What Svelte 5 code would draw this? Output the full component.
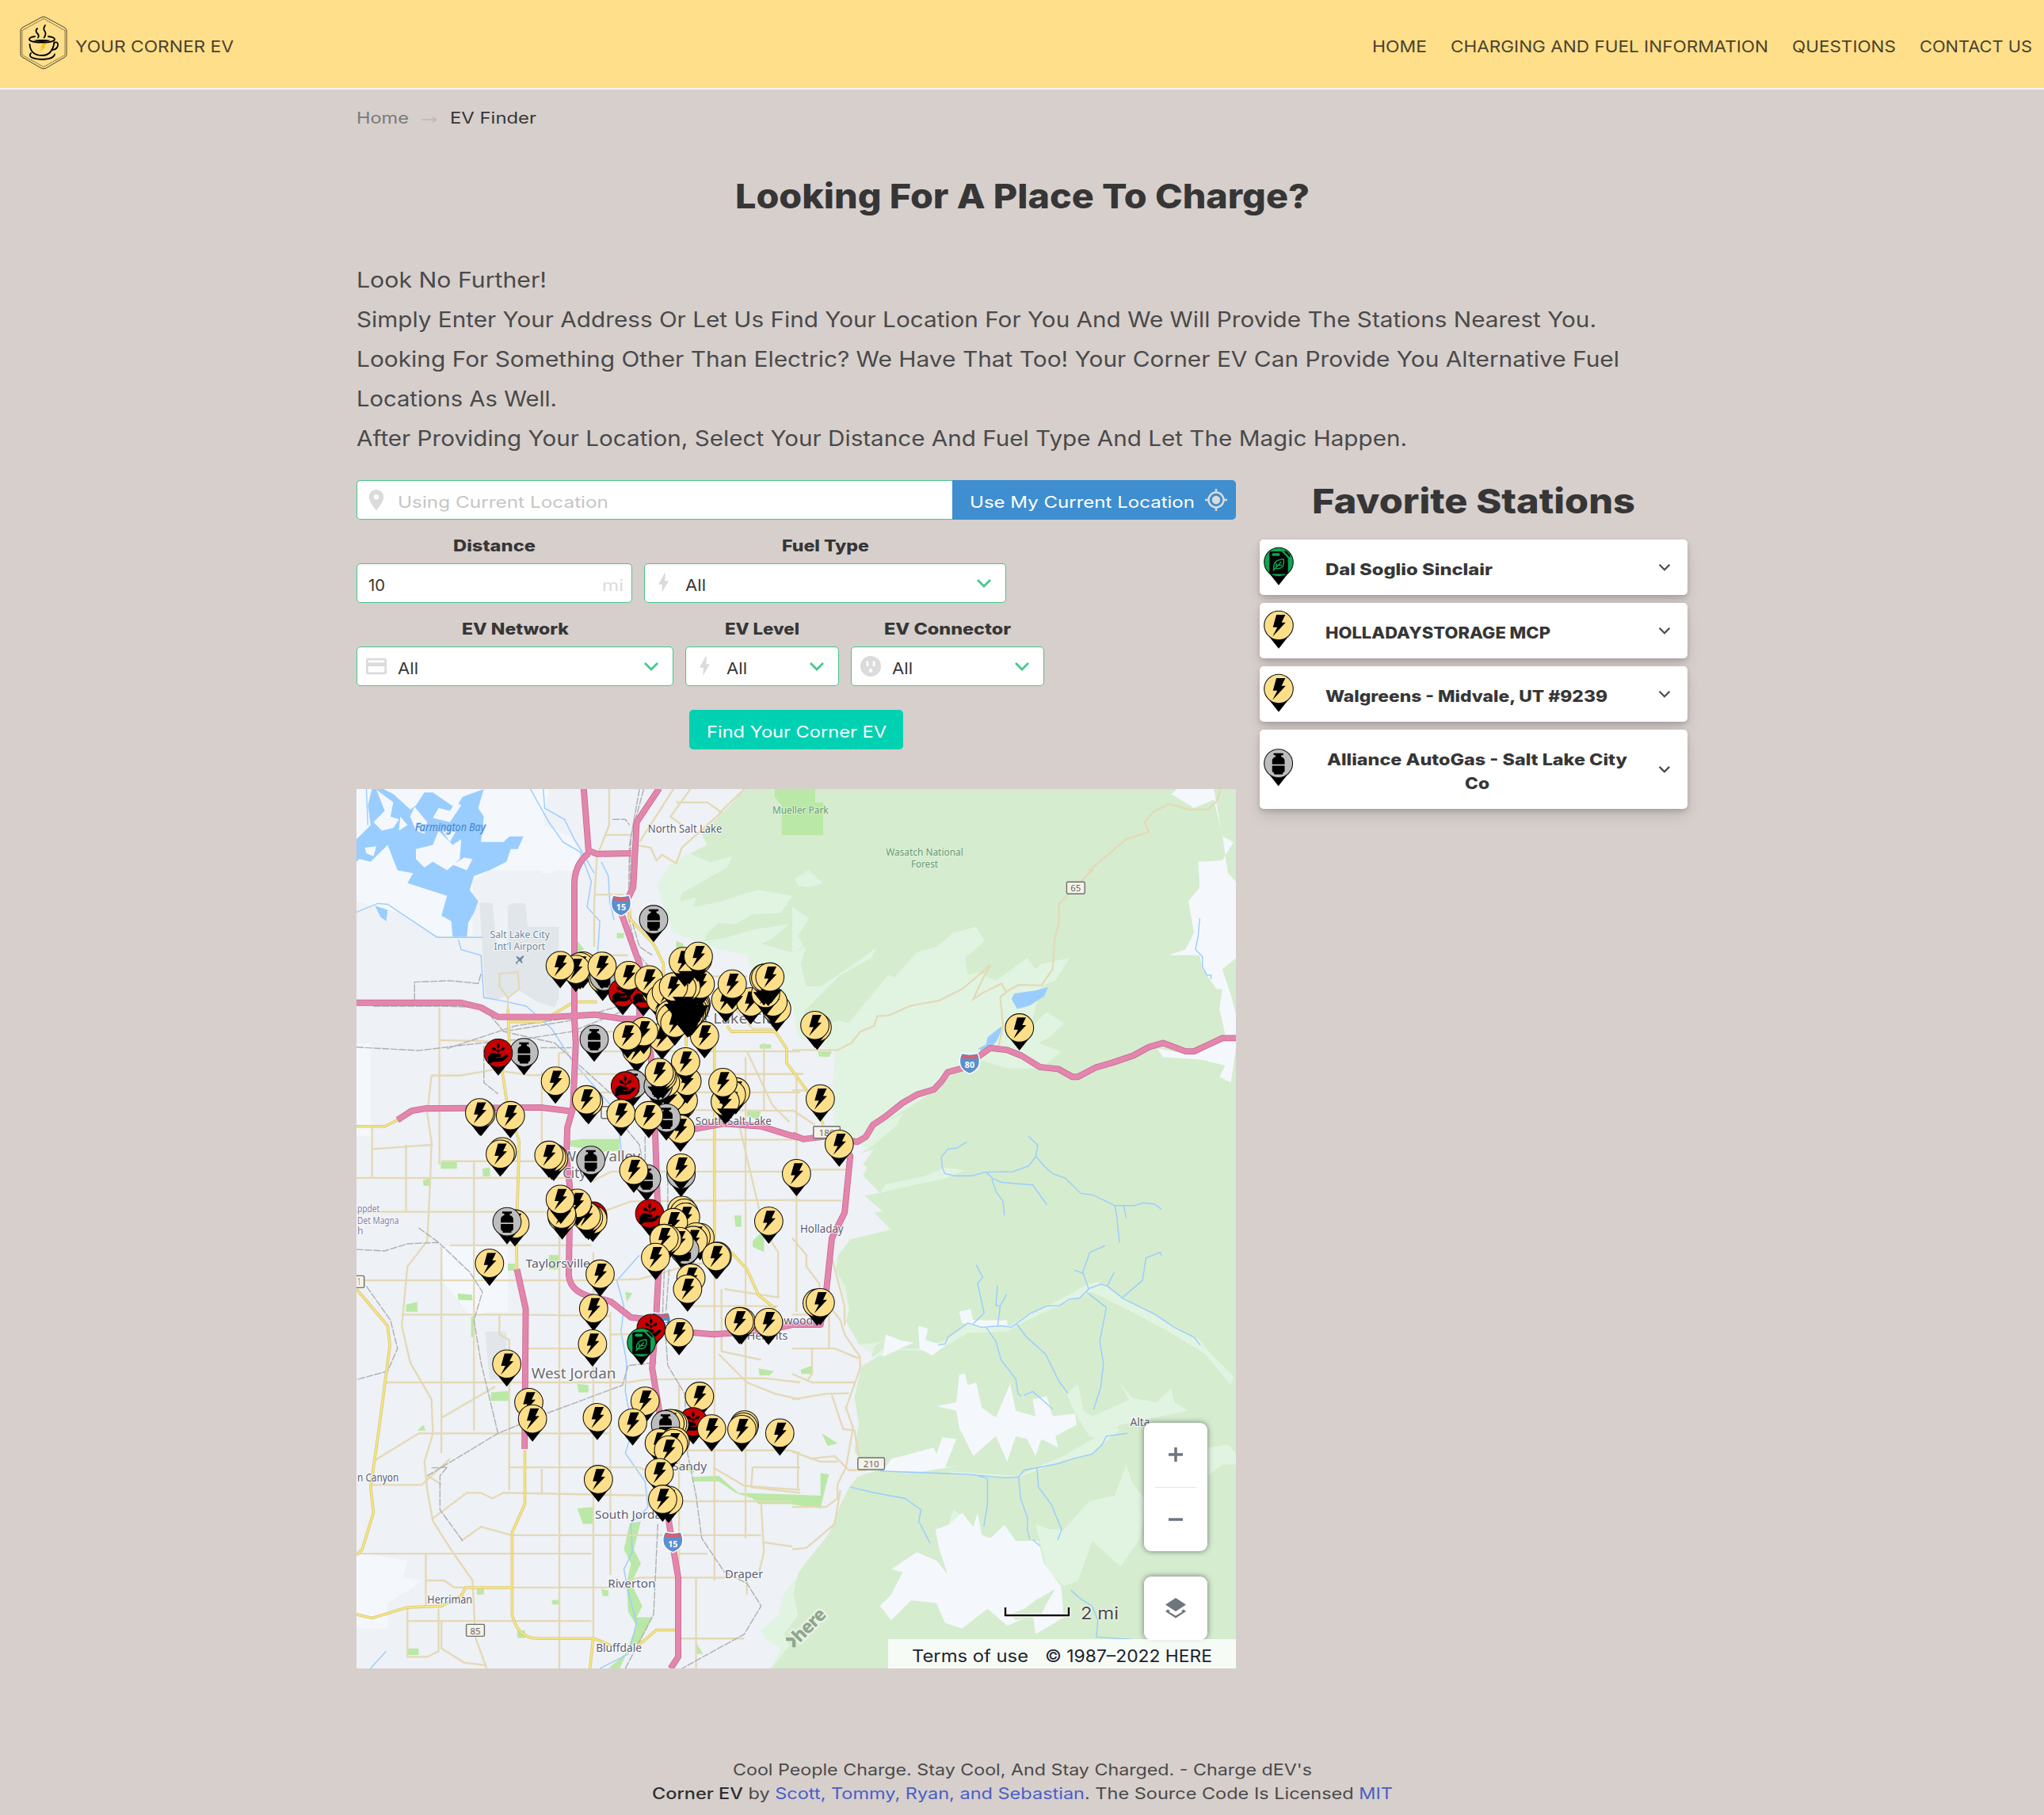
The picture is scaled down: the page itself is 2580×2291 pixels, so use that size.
<script>
  // Extends a line of text to a given width by widening its glyphs.
  function fit(node, width) {
    const range = document.createRange();
    range.selectNodeContents(node);
    const natural = range.getBoundingClientRect().width;
    node.style.width = `${width}px`;
    node.style.transform = `scaleX(${width / natural})`;
  }

  const nav = [
    ['HOME', 69],
    ['CHARGING AND FUEL INFORMATION', 401],
    ['QUESTIONS', 131],
    ['CONTACT US', 142]
  ];

  const intro = [
    ['Look No Further!', 240],
    ['Simply Enter Your Address Or Let Us Find Your Location For You And We Will Provide The Stations Nearest You.', 1565],
    ['Looking For Something Other Than Electric? We Have That Too! Your Corner EV Can Provide You Alternative Fuel', 1594],
    ['Locations As Well.', 253],
    ['After Providing Your Location, Select Your Distance And Fuel Type And Let The Magic Happen.', 1326]
  ];

  const favorites = [
    { type: 'G', lines: [['Dal Soglio Sinclair', 211]] },
    { type: 'E', lines: [['HOLLADAYSTORAGE MCP', 284]] },
    { type: 'E', lines: [['Walgreens - Midvale, UT #9239', 356]] },
    { type: 'L', lines: [['Alliance AutoGas - Salt Lake City', 379], ['Co', 31]] }
  ];

  const fill = { E: '#fedf89', L: '#bdbdbd', R: '#c80000', G: '#0ba750' };

  // type, x, y of each pin head; later pins lie over earlier ones.
  // T is a pin whose head is hidden in a stack, so only its tip is drawn.
  const pins = `
L 1050 464;E 800 628;E 790 631;E 775 640;E 720 627;E 870 672;L 875 665;E 868 629;R 941 722;R 1014 726;
E 1060 720;E 962 662;E 1034 677;E 1230 875;E 1080 880;E 990 925;E 1015 860;E 958 875;
E 1075 745;E 1095 720;E 1108 800;E 1112 812;E 1125 830;E 1200 762;E 1198 770;E 1195 778;E 1190 786;E 1184 794;E 1176 800;
T 1130 715;T 1150 725;T 1170 735;T 1190 730;T 1208 735;T 1145 745;T 1170 760;T 1195 762;T 1180 785;T 1157 775;T 1170 801;T 1200 750;T 1140 735;T 1125 730;T 1160 740;T 1185 745;T 1125 695;T 1195 690;T 1150 700;T 1170 700;T 1165 780;T 1150 765;
E 1215 692;E 1165 702;E 1150 705;E 1120 702;T 1155 705;T 1180 712;T 1165 720;E 1206 604;E 1155 612;T 1160 622;T 1175 614;E 1208 594;
E 1305 748;E 1393 755;T 1328 702;E 1328 692;E 1485 780;E 1472 755;E 1446 725;E 1440 672;E 1446 670;T 1455 690;T 1440 688;T 1465 680;E 1461 667;
L 840 887;L 592 934;R 501 936;E 703 1035;E 820 1108;E 813 1101;
E 440 1150;E 435 1147;E 544 1157;E 515 1285;E 508 1293;E 697 1308;E 690 1304;E 680 1297;L 828 1315;
L 977 1045;R 950 1052;E 1147 1117;E 1155 1103;E 1110 1092;E 1168 1035;E 1163 967;E 1092 1040;L 1066 1052;T 1066 1022;E 1082 1018;E 1077 1011;E 1070 1005;
E 935 1150;E 1145 1205;L 1095 1165;E 1033 1157;E 1340 1073;E 1325 1083;E 1303 1108;T 1312 1100;E 1295 1040;
L 1025 1380;E 980 1350;L 1147 1365;E 1147 1342;E 1555 1362;E 1628 845;E 1620 838;E 2343 847;E 1639 1098;E 1706 1258;
E 560 1540;L 532 1532;R 835 1512;E 835 1524;E 820 1517;E 812 1512;E 780 1467;E 727 1515;E 725 1505;T 722 1460;E 720 1453;
E 1150 1492;E 1158 1502;E 1163 1516;R 1036 1503;E 1120 1535;E 1214 1588;E 1200 1586;E 1190 1598;L 1160 1632;E 1140 1602;E 1098 1593;E 1087 1591;E 1057 1658;E 1275 1654;E 1271 1655;E 1457 1530;
E 1182 1731;E 1170 1770;E 470 1679;E 861 1717;E 838 1839;E 834 1964;E 531 2035;E 609 2171;E 622 2229;E 851 2224;E 1020 2166;E 976 2243;E 855 2443;
R 1041 1909;G 1007 1959;E 1140 1924;E 1360 1886;E 1353 1885;E 1456 1888;E 1212 2149;R 1190 2239;E 1124 2248;E 1117 2246;E 1108 2245;L 1092 2249;
E 1255 2264;E 1371 2250;E 1368 2258;E 1362 2266;E 1496 2279;E 1070 2314;E 1126 2308;E 1120 2316;E 1103 2339;E 1070 2419;E 1103 2517;E 1082 2513;E 1628 1820;E 1639 1818`
    .split(';')
    .map((p) => {
      const [type, x, y] = p.trim().split(' ');
      return { type, x: +x, y: +y };
    });

  // text, x, baseline, width, style
  const labels = [
    ['North Salt Lake', 1030, 158, 262, 'town'],
    ['Farmington Bay', 207, 150, 248, 'lake'],
    ['Mueller Park', 1470, 90, 198, 'park'],
    ['Salt Lake City', 472, 528, 211, 'air'],
    ["Int'l Airport", 486, 571, 181, 'air'],
    ['Wasatch National', 1871, 238, 273, 'park'],
    ['Forest', 1960, 280, 95, 'park'],
    ['Salt Lake City', 1150, 832, 345, 'city'],
    ['South Salt Lake', 1198, 1190, 269, 'town'],
    ['West Valley', 727, 1319, 276, 'city'],
    ['City', 729, 1378, 82, 'city'],
    ['ppdet', 3, 1497, 79, 'edge'],
    ['Det Magna', 3, 1540, 147, 'edge'],
    ['h', 3, 1575, 21, 'edge'],
    ['1', 3, 1755, 12, 'edge'],
    ['Taylorsville', 598, 1694, 228, 'town'],
    ['West Jordan', 618, 2086, 299, 'city'],
    ['Cottonwood', 1385, 1896, 228, 'town'],
    ['Heights', 1380, 1948, 144, 'town'],
    ['Sandy', 1115, 2412, 123, 'town'],
    ['South Jordan', 843, 2582, 262, 'town'],
    ['Riverton', 888, 2826, 169, 'town'],
    ['Draper', 1302, 2792, 135, 'town'],
    ['Herriman', 250, 2881, 159, 'town'],
    ['Bluffdale', 846, 3053, 162, 'town'],
    ['n Canyon', 3, 2451, 146, 'town'],
    ['Holladay', 1568, 1572, 153, 'town'],
    ['Alta', 2734, 2254, 70, 'town']
  ];

  // text, centre x, centre y, width
  const plates = [
    ['65', 2542, 352, 64],
    ['186', 1662, 1216, 94],
    ['171', 905, 1146, 80],
    ['85', 420, 2976, 64],
    ['', -8, 1744, 70],
    ['210', 1819, 2387, 94]
  ];
  const shields = [['15', 935, 412], ['80', 2167, 970], ['15', 1118, 2662], ['215', 1075, 1886]];
</script>

{#snippet pin(type)}
  <path d="M-38 32L0 80L38 32Z" fill="#000" />
  {#if type !== 'T'}
    <circle r="50" fill={fill[type]} stroke="#111" stroke-width="3" />
  {/if}
  {#if type === 'E'}
    <path d="M-8-37H23L10-10H24L-21 38L-5 6H-20Z" fill="#000" />
  {:else if type === 'L'}
    <path d="M-17-36H17V-29H10V-23Q21-20 22-10V3H-22V-10Q-21-20-10-23V-29H-17ZM-22 8H22V26Q21 32 15 34V39H-15V34Q-21 32-22 26Z" fill="#000" />
  {:else if type === 'R'}
    <path d="M-36 12L-28 3Q-18-4-8 2L8 4Q13 10 6 14H-8V17H10L26 6Q36 2 35 11L20 26Q14 31 4 31H-18L-26 36H-36Z" fill="#000" />
    <path d="M0 0V-14M0-4L-9-11M0-4L9-11" stroke="#000" stroke-width="3" fill="none" />
    <path d="M0-16Q-10-26 0-37Q10-26 0-16ZM-7-10Q-22-6-22-20Q-8-22-7-10ZM7-10Q22-6 22-20Q8-22 7-10Z" fill="#000" />
  {:else if type === 'G'}
    <path d="M-24-37H10L32-14V34Q32 41 25 41H-24Q-32 41-32 34V-29Q-32-37-24-37ZM17-38L27-38L39-24V-16Z" fill="#000" />
    <rect x="-23" y="-31" width="27" height="10" rx="4" fill="#0ba750" />
    <path d="M-17 22Q-20-8 17-10Q22 26-10 22ZM-20 30L9-1M-8 17V4M-2 11H11" stroke="#0ba750" stroke-width="4" fill="none" />
  {/if}
{/snippet}

{#snippet chevron()}
  <svg class="chev" viewBox="0 0 20 14"><path d="M2 3l8 8 8-8" /></svg>
{/snippet}

{#snippet bolt()}
  <svg class="ico" viewBox="0 0 24 24"><path d="M12.500 1L5.500 13.500H10L9.500 23L17.500 9.500H13L14 1Z" /></svg>
{/snippet}

<div class="page">
  <header>
    <div class="brand">
      <svg class="logo" viewBox="0 0 60 68">
        <path class="hex" d="M27 2Q30 0 33 2L57 15Q59 17 59 19V49Q59 51 57 52L33 66Q30 68 27 66L3 52Q1 51 1 49V19Q1 17 3 15Z" />
        <path class="hex dash" d="M30 3.500L57 18.500V49.500L30 64.500L3 49.500V18.500Z" />
        <path class="cup" d="M22 16q-3 3 0 6t1 5.500M32 12q-3 4-.5 7.500t-1 8M19 26q-7 1-7 3.500C12 35 44 35 44 29.500q0-2.500-8-3.500M12.500 36q1 14 15.500 14 13 0 15.500-16.500M43 34q6-2 5 3.500T40 43M14 47q-5 7 14 8 15-.5 16-6.500" />
        <path d="M17 31q11-2 22 0q-11 4-22 0Z" />
        <path class="spark" d="M29 35h4l-2 4h2l-8 7 3-6h-2Z" />
      </svg>
      <span use:fit={200}>YOUR CORNER EV</span>
    </div>
    <nav>
      {#each nav as [text, width]}
        <a href="#top"><span use:fit={width}>{text}</span></a>
      {/each}
    </nav>
  </header>

  <main>
    <div class="crumbs">
      <span class="muted" use:fit={66}>Home</span>
      <svg viewBox="0 0 20 10"><path d="M0 5h18M14 1.500l4.500 3.500-4.500 3.500" /></svg>
      <span class="here" use:fit={109}>EV Finder</span>
    </div>
    <h1><span use:fit={725}>Looking For A Place To Charge?</span></h1>
    <div class="intro">
      {#each intro as [text, width]}
        <p><span use:fit={width}>{text}</span></p>
      {/each}
    </div>

    <div class="columns">
      <section class="left">
        <div class="search">
          <div class="field grow">
            <svg class="ico" viewBox="0 0 24 24"><path d="M12 0a8.500 8.500 0 0 0-8.500 8.500C3.500 15 12 24 12 24s8.500-9 8.500-15.500A8.500 8.500 0 0 0 12 0Zm0 11.500a3 3 0 1 1 0-6 3 3 0 0 1 0 6Z" /></svg>
            <span class="ghost" use:fit={266}>Using Current Location</span>
          </div>
          <button class="locate">
            <span use:fit={284}>Use My Current Location</span>
            <svg viewBox="0 0 28 28"><circle cx="14" cy="14" r="9.500" /><path d="M14 0v5M14 23v5M0 14h5M23 14h5" /><circle class="dot" cx="14" cy="14" r="5.200" /></svg>
          </button>
        </div>

        <div class="row">
          <div class="group distance">
            <div class="label"><span use:fit={104}>Distance</span></div>
            <div class="field"><span class="val" use:fit={21}>10</span><span class="unit" use:fit={27}>mi</span></div>
          </div>
          <div class="group fuel">
            <div class="label"><span use:fit={110}>Fuel Type</span></div>
            <div class="field">{@render bolt()}<span class="val" use:fit={26}>All</span>{@render chevron()}</div>
          </div>
        </div>

        <div class="row">
          <div class="group network">
            <div class="label"><span use:fit={135}>EV Network</span></div>
            <div class="field">
              <svg class="ico" viewBox="0 0 24 24"><path fill-rule="evenodd" d="M2 2.500h20q2 0 2 2v15q0 2-2 2H2q-2 0-2-2v-15q0-2 2-2ZM2.500 5v2.500h19V5ZM2.500 12v7h19v-7Z" /></svg>
              <span class="val" use:fit={26}>All</span>{@render chevron()}
            </div>
          </div>
          <div class="group level">
            <div class="label"><span use:fit={94}>EV Level</span></div>
            <div class="field">{@render bolt()}<span class="val" use:fit={26}>All</span>{@render chevron()}</div>
          </div>
          <div class="group connector">
            <div class="label"><span use:fit={160}>EV Connector</span></div>
            <div class="field">
              <svg class="ico" viewBox="0 0 24 24"><path fill-rule="evenodd" d="M12 0a12 12 0 1 1 0 24a12 12 0 0 1 0-24ZM7 6v6h2.500V6ZM14.500 6v6H17V6ZM10 19h4v-3q-2-2.500-4 0Z" /></svg>
              <span class="val" use:fit={26}>All</span>{@render chevron()}
            </div>
          </div>
        </div>

        <button class="find"><span use:fit={227}>Find Your Corner EV</span></button>

        <div class="map">
          <svg class="canvas" viewBox="0 2.800 3108 3108">
            <rect width="3108" height="3111" fill="#eef1f5" />
            <!-- open ground -->
            <g fill="#f4f8fc">
              <path d="M0 0H680L660 130L755 170L795 225L770 270V290H470L410 330V520H280L150 440L0 400ZM655 165H720V220H695V300H655ZM0 900H50V1230H0ZM300 1620H535V1850H460L410 1870L310 1750ZM0 2700L180 2730L165 2790L230 2800L190 2830L110 2880V2970H0Z" />
            </g>
            <path d="M435 405H480L495 550H535V415L550 407H597L605 490H715V740L700 775L640 755L575 715L490 750L455 735ZM455 1920H530V2090H470Z" fill="#e1e6eb" />
            <!-- foothills and forest -->
            <path d="M1368 0H3108V3111H1465L1500 3040L1450 3010L1430 2974L1490 2924L1510 2844L1568 2776L1590 2734L1670 2634L1710 2534L1740 2474L1760 2449L1860 2404L1775 2364L1760 2344L1775 2244L1760 2154L1785 2044L1840 2014L1775 1964L1730 1884L1740 1844L1695 1704L1745 1594L1790 1584L1880 1560L1850 1430L1795 1370L1830 1290L1690 1200L1680 1100L1690 930L1560 880L1540 760L1400 650L1380 590L1250 560L1120 510L1080 400L1062 340L1110 265L1235 200L1215 150L1250 130L1340 50Z" fill="#e1f4e2" />
            <path d="M1368 0L1330 50L1250 130L1215 150L1240 200L1180 230L1250 262L1330 240L1310 280L1150 370L1145 400L1200 385L1190 420L1290 400L1360 375L1420 360L1540 380L1500 440L1400 445L1340 480L1280 475L1240 510L1230 540L1300 530L1400 500L1530 480L1470 530L1430 550L1540 580L1590 560L1570 620L1590 700L1640 700L1760 620L1835 565L1820 600L1710 660L1590 780L1565 830L1590 880L1640 850L1700 820L1740 830L1780 780L1880 660L1900 670L1980 580L2050 560L2110 510L2190 490L2220 540L2150 600L2160 660L2200 650L2260 680L2370 600L2400 640L2420 620L2520 600L2470 680L2420 700L2380 850L2440 790L2500 830L2450 880L2410 900L2490 930L2420 990L2300 990L2200 960L2140 980L2040 1070L1950 1130L1850 1190L1930 1150L1910 1190L1830 1260L1780 1290L1830 1275L1790 1330L1805 1340L1790 1370L1850 1430L1870 1400L2010 1370L2080 1340L2150 1350L2080 1380L1980 1400L1850 1430L1795 1440L1860 1495L1830 1500L1890 1560L1790 1584L1745 1594L1700 1654L1695 1704L1730 1764L1740 1844L1730 1884L1775 1964L1840 1960L1870 1944L1830 1974L1820 2014L1860 1980L2000 1980L2080 1950L2170 1890L2260 1890L2310 1900L2370 1860L2460 1820L2590 1750L2620 1745L2760 1830L2980 1950L3020 2000L3100 2080L3060 2190L3090 2110L3000 2000L2870 1920L2700 1830L2600 1780L2480 1830L2370 1880L2300 1920L2160 1925L2050 1990L1920 1985L1840 2010L1785 2044L1760 2154L1775 2244L1760 2344L1775 2364L1860 2404L1770 2434L1740 2474L1710 2534L1670 2634L1590 2734L1560 2776L1545 2844L1560 2924L1510 2990L1530 3030L1465 3111H3108V0Z" fill="#d5eccf" />
            <!-- clearings -->
            <g fill="#e1f4e2">
              <path d="M1550 320L1600 288L1630 320L1650 335L1600 350L1560 345ZM1540 420L1600 460L1560 520L1580 560L1540 580ZM2510 2140L2550 2105L2570 2200L2600 2220L2690 2180L2730 2160L2690 2090L2740 2155L2830 2170L2880 2120L2890 2170L2940 2200L2700 2250L2640 2300L2590 2290L2540 2210ZM2720 2390L2740 2450L2790 2520L2770 2650L2700 2750L2600 2660L2550 2800L2500 2820L2440 2760L2400 2600L2450 2620L2500 2620L2590 2520L2680 2500ZM3010 2330L3080 2320L3108 2350V2390L3060 2390L3010 2430ZM2090 2610L2110 2550L2150 2580L2110 2600Z" />
              <path d="M2340 2430L2400 2400L2500 2360L2620 2290L2680 2260L2700 2265L2600 2350L2470 2385L2340 2435L2100 2425V2415Z" />
            </g>
            <g fill="#f4f8fc">
              <path d="M2900 2L2880 20L2960 70L3030 40L3060 165L3080 300L3108 330V600L3060 640L3090 730L3108 800V920L3090 1040L3050 1020L3070 980L2990 960L2850 950L2830 920L2940 940L3010 900L3070 870L3050 780L3060 710L3040 710L2990 640L2980 590L2870 590L2930 570L2960 510L2940 400L2980 350L2975 260L3060 255L3100 190L3060 170L3030 2Z" />
              <path d="M2130 2074L2150 2068L2160 2110L2190 2100L2210 2190L2260 2224L2310 2104L2330 2200L2400 2220L2390 2160L2440 2150L2460 2220L2540 2210L2545 2250L2470 2290L2480 2330L2420 2300L2400 2360L2370 2300L2330 2290L2300 2380L2260 2290L2180 2360L2160 2320L2130 2260L2120 2200L2050 2184L2120 2170Z" />
              <path d="M1860 2414L1890 2370L2040 2330L2050 2354L2070 2294L2120 2300L2080 2400L2160 2390L2000 2415ZM2046 2620L2100 2600L2140 2560L2180 2610L2195 2560L2210 2640L2240 2650L2290 2604L2330 2660L2410 2660L2430 2740L2490 2820L2500 2930L2400 2990L2390 2920L2300 2960L2230 2900L2140 2970L2080 2950L2050 2880L1960 2870L1890 2940L1850 2890L1890 2850L1930 2770L1890 2760L1980 2700L2050 2730L2090 2780L2060 2690ZM1860 2010L1870 1930L1920 1950L1970 1960L1920 1980ZM1985 1900L2020 1910L2010 1950L2080 1970L2035 2005L1990 1980ZM2130 1850L2170 1840L2180 1880L2300 1880L2300 1900L2220 1905L2140 1890Z" />
            </g>
            <path d="M2400 2870L2470 2830L2440 2880L2420 2920L2330 2940L2310 2920L2360 2900Z" fill="#d5eccf" />
            <!-- parks -->
            <g fill="#bae8a6">
              <path d="M1478 0H1621V50H1649V165H1503V60L1478 30ZM780 540L805 570L780 580ZM920 512H945V530H920ZM1130 540L1155 550L1150 610L1130 590ZM755 1245L800 1240L930 1240V1280L870 1285L755 1265ZM298 1320H355V1345H298ZM445 1345L472 1340V1372H447ZM235 1385L262 1378V1405H237ZM680 1650H715V1700H680ZM535 1680H560V1705H535ZM357 1785L408 1790L410 1810L360 1808ZM175 1825L215 1815V1850H175ZM405 1870L420 1860L415 1940H405ZM1190 2434L1280 2430L1350 2490L1640 2500V2420L1670 2425L1660 2460L1640 2545L1530 2530H1420L1400 2510L1340 2490L1280 2450L1190 2450ZM780 2545L835 2540V2600H800ZM475 2135L540 2130V2165H475ZM780 2105L820 2110V2135H785ZM965 2600L1005 2590L980 2690L1005 2740L970 2810L1010 2890L990 2930L1045 2930L1000 3020L965 3035L930 3111H890L950 3060L990 2960L960 2910L955 2810L970 2740L945 2690ZM865 2830L890 2835V2855H870ZM425 2830H450V2850H425ZM568 2980L595 2975V3003H568ZM180 3040H220V3063H180ZM1200 3020L1225 3060H1198ZM1425 905L1465 905V920H1425ZM1380 1140H1430L1420 1170L1380 1160ZM1335 1510H1360V1550H1340ZM1400 1600L1440 1560V1640L1400 1620ZM950 1780L975 1785L955 1815ZM1130 2390L1200 2400L1190 2420ZM1630 930L1680 930L1670 950L1635 948ZM1645 2280L1700 2315L1665 2325ZM1570 2055L1612 2040V2070H1572ZM1420 2050L1475 2060L1460 2075H1425ZM215 2270L235 2250L245 2270ZM690 2870L715 2868V2885H692Z" />
            </g>
            <!-- water -->
            <g fill="#9acdff">
              <path d="M55 0H90L130 20L190 75L210 60L240 15H270L350 70L375 30L450 3L430 70L450 100L440 190L520 190L540 170L590 170L570 215H545L530 260L470 290L415 310L400 360L430 400L415 440L395 475L390 525H340L335 470L300 450L320 380L180 335L200 300L145 290L110 200L50 260L10 250L0 260V180L50 130L40 60ZM65 415L110 430L105 470L85 455Z" />
              <path d="M2315 745L2325 725L2400 715L2445 703L2430 735L2380 768L2335 780ZM2197 920L2225 905L2230 880L2275 845L2285 840L2265 890L2240 920L2215 930Z" />
            </g>
            <g fill="#f4f8fc">
              <path d="M70 5L130 50L120 100L150 110L130 140L90 150L60 120L100 80ZM155 100L180 130L150 150ZM205 65L250 120L240 160L210 150L190 100ZM290 70L330 80L350 50L370 60L330 120L270 105ZM30 210L70 205L60 240L35 230ZM210 215L270 200L290 150L340 200L370 180L365 250L320 290L270 260L240 280L210 250ZM300 145L350 155L330 190ZM380 245L410 250L390 290L340 270Z" />
            </g>
            <g class="stream">
              <path d="M0 438L75 407L110 410L285 527H445M360 535L370 570L440 590L450 740L510 750L600 770L690 850L760 960L880 1100L930 1150V1230L940 1320M615 3L680 120L730 190L790 225L830 330L815 420L860 470L850 610M660 3L665 70L735 110L770 180L800 230L840 300M865 260L890 310L895 400L910 465M35 3L40 130" />
              <path d="M1000 1650L920 1740L945 1830L935 1920L955 2030L950 2130L975 2270L950 2350L1020 2450L1030 2540L970 2600L975 2700L945 2760L960 2840L990 2950L960 3060L860 3111M50 3110L105 3050" />
              <path d="M2980 460L2975 520L2965 570L2990 595L2990 630L3005 660H3020V675" />
              <path d="M2157 1250L2120 1272L2090 1275L2067 1303L2070 1340L2080 1362L2115 1370L2175 1370L2220 1357L2320 1355L2375 1335L2400 1303L2408 1262L2375 1230M2403 1303L2430 1335L2460 1362L2505 1378L2560 1432L2605 1438L2680 1475H2750L2780 1465L2820 1470L2845 1488M2680 1475L2688 1520L2690 1550L2697 1605M2720 1520L2712 1475M2225 1357L2250 1380L2280 1393L2390 1402L2410 1430L2440 1472M2245 1380L2260 1425L2285 1460L2290 1510" />
              <path d="M2055 1968L2080 1964L2090 1940L2160 1890L2210 1905L2280 1900L2315 1905L2380 1857L2440 1830L2485 1828L2520 1806L2555 1802L2590 1768L2630 1753L2655 1760L2710 1804L2820 1858L2890 1905L2960 1940L2982 1968M2190 1684L2213 1728L2195 1750L2218 1854L2180 1893M2265 1757L2260 1828L2275 1830L2298 1788M2275 1830L2266 1900M2225 1905L2260 1955L2278 2020L2330 2088L2338 2140L2350 2148M2333 1893L2365 1936L2435 2000L2485 2100L2515 2138M2582 1782L2650 1835L2627 1955L2640 2034L2630 2118L2605 2196M2587 1768L2567 1710L2592 1640L2645 1617M2538 1703L2567 1714M2653 1760L2678 1710M2705 1802L2778 1739L2790 1660L2840 1640L2845 1651M2360 2145L2390 2132L2460 2194" />
              <path d="M1850 2413L2030 2420L2160 2425L2290 2437L2340 2434L2360 2410L2480 2387L2530 2370L2600 2353L2635 2320L2650 2290L2725 2280M1745 2470L1830 2490L1940 2510L1995 2550L1987 2590L2027 2668M2182 2425L2230 2440V2530L2217 2610M2340 2434L2347 2510L2372 2580L2370 2620L2380 2655M2405 2400L2410 2470L2455 2530L2492 2620L2478 2657M2390 2656L2415 2678M2525 2834L2555 2862L2600 2890L2620 2940L2615 3000L2740 3008" />
            </g>
            <!-- local roads -->
            <g class="minor">
              <path d="M893 3V130L850 240L840 400V560M840 376H945M880 165H990M1130 50H1240L1290 85L1150 210L1130 265L1080 235L1060 255L1040 210L985 200M1120 3L1000 190M1370 3L1280 90M1180 3L1110 100L1150 130M505 655L570 650L575 710L535 740L505 700ZM535 740V780M293 775V1330M295 890L500 895M265 1015H370L480 995L620 1015L700 1010M265 1015L250 1150L265 1250L260 1400L250 1600L180 1690L160 1900L190 2030L265 2160L270 2280L240 2380L250 2480L270 2590L340 2700L410 2800L420 3000L460 3111M55 1275L270 1260M175 1260V1497M55 1200V1380M0 1377H745M0 1497H740L860 1500L970 1460L1568 1455M300 1318H640M415 1318V1620M655 1000V1320M715 935V1010M715 935H750M830 930H1568M780 1010H1568M780 1075H1568M1180 1137L1540 1140M1200 1242H1540M830 1390L900 1355H1568M1200 665H1380M1265 850V2800M1375 950V2650M1440 900V1140M1380 930L1470 1120L1530 1180M1355 1200L1440 1560L1490 1640V1800M1310 750L1400 850H1480M830 590H960M780 860H950" />
              <path d="M0 1739H860L1000 1735L1160 1690M160 1860H560L900 1865M300 1620V2350M415 1620V2270M330 1615H830M105 2100H480L960 2100L1020 2090L1440 2085L1568 2100M600 1980H890M65 2375L220 2280H900M300 2225L490 2115M505 1860V1930L540 1950V2480M540 2400H1000L1040 2420M550 2640H1430M270 2580L390 2490H440L480 2510L520 2490L1040 2500M1100 2520H1540M370 2660L440 2610L550 2640M0 2705H830M245 2705V2890M245 2800H310L345 2825H550L830 2825H960M180 2943H830M180 2900V3070H250L290 3050V2900M655 2405V2490M717 1500V3111M837 1640V3010M897 1850V2780M1140 2100V2820M300 2945V3040L380 3090L460 3100M960 2800L1000 2790H1300L1340 2780M1200 2790V3111M1145 3005H1370M1430 2530L1440 2700L1420 2780M1140 2705H1240M1380 2790V2850M1160 2340H1530L1568 2350M1400 2400H1568M1400 2400L1395 2470L1568 2490M1260 2400L1370 2465L1568 2480M1440 2665L1540 2680M1495 1800L1300 1770M1160 1830H1490M1180 1680H1280M1290 1770V1990L1430 2020M900 1930L1380 1925M1280 2000L1380 2100L1480 2140L1568 2160M250 2430L300 2460M50 2462H230L330 2370" />
              <path d="M1540 1010H1580M1555 1025V1850M1540 1348H1730M1540 1457H1715M1540 1068H1590M1540 1137L1620 1190M1540 1590L1590 1650V1690L1635 1750L1640 1790L1710 1880L1725 1930L1780 2010L1780 2050L1730 2190L1755 2260L1730 2400L1700 2460V2510L1660 2540H1540M1540 1860H1670V1980M1540 1980H1690L1775 2015M1540 2070L1610 2100H1760M1540 2160L1660 2140L1740 2138M1610 1980V2070L1595 2090M1680 2145L1720 2265L1760 2270L1775 2360M1540 2345L1640 2380H1700M1560 2345V2480M1600 2370L1690 2360L1740 2410H1800M1710 2480L1690 2600L1590 2685L1540 2690M1680 1660L1725 1830V1900" />
              <path d="M1540 925H1700L1750 900L1780 860L1830 840L1840 805L1880 803L1960 768L2060 750L2140 710L2240 625L2215 670L2180 745L2210 725L2280 690L2295 720L2340 695L2420 697L2460 640L2468 530L2482 480V410L2570 320L2600 290H2590L2650 240L2720 180L2800 155L2785 120L2815 85L2870 55L2940 75H3010L3040 45L3055 3M2275 738L2310 710M2275 738L2285 840L2270 910" />
            </g>
            <!-- railways -->
            <g class="rail">
              <path d="M1000 3L965 200L960 450L990 580L1050 650M1015 3L970 170L965 440L1000 560L1045 590M905 110H950L965 130M205 750V685L330 680L430 690L440 655M60 770H300L450 775L520 860L760 820L960 760M0 915L220 927L400 905L600 885L760 860L960 780M320 920L560 840L760 810M520 860L700 900L900 1080M450 910V1040L500 1080M650 917H760M950 1200L1000 1260L1040 1500L1090 1650L1080 1900M1100 1350V1560M1020 1230V1330" />
              <path d="M0 1630L100 1635L180 1610L290 1605L400 1710L445 1780L415 1880L440 2030L500 2280M220 1554L290 1605M35 1760L120 1880L145 1980L110 2060L0 2090M250 2430L500 2280L670 2210L940 2110L960 2040L1060 2030M320 2400L265 2402M320 2400L295 2430V2550L375 2660M1105 1700L1090 1900L1100 2040L1160 2140L1170 2350L1200 2500L1220 2650L1300 2770L1380 2810L1430 2890L1370 2990L1150 3111M1065 2600L1050 2920L950 3111" />
            </g>
            <!-- arterial roads -->
            <g class="art-edge">
              <path id="arterial" d="M965 380V460L1050 550L1085 620V660M535 780L540 900L515 1000L530 1100L575 1250L570 1420L565 1554L567 1700M535 825L650 825L770 755H850M0 1195H100L150 1170M1165 770V980M1310 840L1325 860H1480L1520 920V970L1600 1080L1650 1190M1265 850V1600M1325 1640L1380 1700L1420 1790L1480 1840M0 1770L110 1900L118 1970L80 2260L50 2470L60 2560L20 2690L0 2710M595 2340L595 2530L550 2630V2920Q570 3010 650 3005H840L900 3030M837 3000L825 3111M995 3030L1060 2975H1140M0 2920L55 2933L180 2895L300 2890L370 2855L385 2825H550" />
            </g>
            <!-- motorways -->
            <g class="art">
              <path d="M965 380V460L1050 550L1085 620V660M535 780L540 900L515 1000L530 1100L575 1250L570 1420L565 1554L567 1700M535 825L650 825L770 755H850M0 1195H100L150 1170M1165 770V980M1310 840L1325 860H1480L1520 920V970L1600 1080L1650 1190M1265 850V1600M1325 1640L1380 1700L1420 1790L1480 1840M0 1770L110 1900L118 1970L80 2260L50 2470L60 2560L20 2690L0 2710M595 2340L595 2530L550 2630V2920Q570 3010 650 3005H840L900 3030M837 3000L825 3111M995 3030L1060 2975H1140M0 2920L55 2933L180 2895L300 2890L370 2855L385 2825H550" />
            </g>
            <g class="hw-edge">
              <path id="motorway" d="M803 0L820 220L850 232L970 230M820 230Q770 270 770 340V820L775 900L765 1130L745 1200L742 1300L755 1420L750 1720Q755 1790 860 1803L900 1815L970 1870L1060 1880M1070 0L990 120L978 350L935 440L1000 620V800L1040 940L1055 1200L1065 1500L1068 1700L1060 1850L1045 2050L1070 2200L1105 2600L1137 2790V3070L1110 3111M0 758H370L440 775L500 808H700L840 800L940 815H1000M145 1172L195 1140L240 1132L650 1128L770 1143M1190 1205L1300 1185L1430 1195L1560 1235M567 1700L598 1840L594 2335M1190 1924L1260 1930L1350 1924L1500 1905L1540 1896H1640L1660 1780L1680 1590L1725 1500L1745 1300L1715 1250" />
              <path id="canyon" d="M1540 1225L1580 1240L1660 1230L1770 1250L1800 1232L1825 1190L1870 1160L1930 1112L1980 1083L2040 1065L2068 1035L2090 1003L2140 990L2240 918L2300 925L2350 945L2415 985L2480 992L2530 1020H2550L2610 988L2670 970L2745 945L2800 915L2850 900L2930 930H2960L3060 883H3108" />
            </g>
            <g class="hw">
              <use href="#motorway" />
              <use href="#canyon" />
            </g>

            <path d="M565 592l12 8 12-9 3 3-9 12 4 13-4-1-7-8-8 7 1 6-3-1-4-9 4 1 6-7-7-10Z" fill="#6f879b" />

            {#each plates as [text, x, y, w]}
              <g transform="translate({x} {y})">
                <rect x={-w / 2} y="-21" width={w} height="42" rx="4" fill="#f5f2e8" stroke="#6f6f70" stroke-width="4" />
                <text class="plate" y="13" text-anchor="middle">{text}</text>
              </g>
            {/each}
            {#each shields as [text, x, y]}
              <g transform="translate({x} {y})">
                <path d="M-28-34Q0-26 28-34Q40-10 32 12Q24 30 0 39Q-24 30-32 12Q-40-10-28-34Z" fill="#5b8fce" stroke="#fff" stroke-width="4" />
                <path d="M-24-29Q0-22 24-29L28-15H-28Z" fill="#d95e6e" />
                <text class="shield" y="19" text-anchor="middle">{text}</text>
              </g>
            {/each}
            {#each labels as [text, x, y, w, kind]}
              <text class={kind} {x} {y} textLength={w} lengthAdjust="spacingAndGlyphs">{text}</text>
            {/each}

            <g transform="translate(1556 3012) rotate(-45)">
              <path d="M-24-30L-4-10L-24 10" fill="none" stroke="#8fa68f" stroke-width="12" />
              <text class="watermark" x="0" y="14">here</text>
            </g>

            {#each pins as p}
              <g transform="translate({p.x} {p.y})">{@render pin(p.type)}</g>
            {/each}
          </svg>

          <div class="zoom">
            <svg viewBox="0 0 18 18"><path d="M9 0v18M0 9h18" /></svg>
            <hr />
            <svg viewBox="0 0 18 18"><path d="M0 9h18" /></svg>
          </div>
          <div class="layers">
            <svg viewBox="0 0 28 28"><path d="M14 1L27 9.500 14 18 1 9.500ZM4 15.500L1 18l13 8.500L27 18l-3-2.500-3 2 1.500 1L14 23.500 5.500 18.500l1.500-1Z" /></svg>
          </div>
          <div class="scale">
            <svg viewBox="0 0 84 13"><path class="halo" d="M2 1V11H82V1" /><path d="M2 1V11H82V1" /></svg>
            <span use:fit={48}>2 mi</span>
          </div>
          <div class="credit">
            <span use:fit={147}>Terms of use</span>
            <span use:fit={211}>© 1987–2022 HERE</span>
          </div>
        </div>
      </section>

      <aside>
        <h2><span use:fit={408}>Favorite Stations</span></h2>
        {#each favorites as f}
          <div class="card" class:tall={f.lines.length > 1}>
            <svg class="badge" viewBox="-52 -53 104 136">{@render pin(f.type)}</svg>
            <div class="name">
              {#each f.lines as [text, width]}
                <div><span use:fit={width}>{text}</span></div>
              {/each}
            </div>
            {@render chevron()}
          </div>
        {/each}
      </aside>
    </div>
  </main>

  <footer>
    <p><span use:fit={731}>Cool People Charge. Stay Cool, And Stay Charged. - Charge dEV's</span></p>
    <p><span use:fit={935}><b>Corner EV</b> by <a href="#team">Scott, Tommy, Ryan, and Sebastian</a>. The Source Code Is Licensed <a href="#mit">MIT</a></span></p>
  </footer>
</div>

<style>
  :global(body) { margin: 0; background: #d7cfcc; }
  .page {
    height: 2291px; box-sizing: border-box; background: #d7cfcc; color: #4a4a4a; overflow: hidden;
    font: 400 20px/30px Inter, "Noto Sans", sans-serif;
  }
  span { display: inline-block; vertical-align: top; white-space: nowrap; text-align: left; transform-origin: 0 50%; }
  p, h1, h2 { margin: 0; }
  button { border: 0; font: inherit; color: #fff; padding: 0; }

  header {
    height: 111px; background: #ffdf89; border-bottom: 2px solid #f5f5f5; box-sizing: content-box;
    display: flex; justify-content: space-between; align-items: center; color: #4a4230;
  }
  .brand { display: flex; align-items: center; gap: 10px; padding-left: 25px; }
  .brand span, nav { padding-top: 6px; }
  .logo { width: 60px; height: 68px; position: relative; top: -2px; }
  .hex { fill: none; stroke: #4c432c; stroke-width: 1; }
  .dash { stroke-dasharray: 1 1; stroke-width: 1.2; }
  .cup { fill: none; stroke: #000; stroke-width: 1.8; stroke-linecap: round; }
  .spark { fill: #fbc318; }
  nav { display: flex; gap: 30px; padding-right: 15px; }
  nav a { color: inherit; text-decoration: none; }

  main { width: 1680px; margin: 0 auto; }
  .crumbs { display: flex; align-items: center; gap: 16px; padding-top: 21px; height: 30px; }
  .crumbs svg { width: 20px; height: 10px; margin-top: 4px; fill: none; stroke: #b9b5b5; stroke-width: 1.3; }
  .muted { color: #7a7a7a; }
  .here { color: #363636; }
  h1, h2 { color: #363636; font-weight: 800; font-size: 43px; line-height: 50px; text-align: center; }
  h1 { padding: 58px 0 57px; }
  .intro { font-size: 27px; line-height: 50px; }

  .columns { display: flex; gap: 30px; padding-top: 27px; }
  .left { width: 1110px; display: flex; flex-direction: column; }
  .search { display: flex; }
  .field {
    height: 50px; box-sizing: border-box; background: #fff; border: 1.5px solid #48c78e; border-radius: 5px;
    display: flex; align-items: center; padding: 0 14px 0 11px; box-shadow: inset 0 1px 2px rgba(10, 10, 10, .05);
  }
  .field span { padding-top: 6px; }
  .grow { flex: 1; border-right: 0; border-radius: 5px 0 0 5px; }
  .ico { width: 26px; height: 26px; fill: #dbdbdb; margin-right: 14px; }
  .ghost { color: #c6c6c6; }
  .val { color: #363636; margin-right: auto; }
  .unit { color: #dbdbdb; }
  .locate {
    width: 358px; height: 50px; background: #3e8ed0; border-radius: 0 5px 5px 0;
    display: flex; align-items: center; justify-content: space-between; padding: 0 11px 0 22px;
  }
  .locate span { padding-top: 6px; }
  .locate svg { width: 28px; height: 28px; fill: none; stroke: #dbdbdb; stroke-width: 2.5; }
  .locate .dot { fill: #dbdbdb; stroke: none; }
  .row { display: flex; gap: 15px; padding-top: 18px; }
  .label { text-align: center; color: #363636; font-weight: 800; height: 37px; }
  .distance { width: 348px; }
  .distance .field { padding-left: 14px; padding-right: 10px; }
  .fuel { width: 457px; }
  .network { width: 400px; }
  .level { width: 194px; }
  .connector { width: 244px; }
  .chev { width: 20px; height: 14px; fill: none; stroke: #48c78e; stroke-width: 2.8; margin-right: 3px; }
  .find {
    align-self: center; width: 270px; height: 50px; margin: 30px 0 50px; border-radius: 5px; background: #00d1b2;
  }
  .find span { padding-top: 6px; }

  .map { position: relative; width: 1110px; height: 1110px; overflow: hidden; font-size: 21px; }
  .canvas { display: block; width: 100%; height: 100%; }
  .stream { fill: none; stroke: #9acdff; stroke-width: 4; }
  .minor { fill: none; stroke: #e4d9b6; stroke-width: 6.5; }
  .rail { fill: none; stroke: #b0b0b2; stroke-width: 4; stroke-dasharray: 26 4; }
  .art-edge { fill: none; stroke: #d6c37c; stroke-width: 10; }
  .art { fill: none; stroke: #f6e67d; stroke-width: 6; }
  .hw-edge { fill: none; stroke: #c9618f; stroke-width: 22; stroke-linejoin: round; }
  .hw { fill: none; stroke: #e386ad; stroke-width: 18; stroke-linejoin: round; }
  .canvas text {
    font-family: "Noto Sans", "Open Sans", sans-serif; font-size: 38px; fill: #5b5c74;
    stroke: #fff; stroke-width: 6; stroke-opacity: .75; paint-order: stroke; stroke-linejoin: round;
  }
  .canvas .city { font-size: 52px; fill: #6a6b70; }
  .canvas .lake { fill: #4583cb; font-style: italic; stroke: #9acdff; }
  .canvas .park { fill: #679b77; stroke: #e0f2da; font-size: 36px; }
  .canvas .air { fill: #6f879b; font-size: 37px; }
  .canvas .edge { fill: #857fa5; font-size: 36px; }
  .canvas .plate { font-size: 32px; fill: #666; stroke: none; }
  .canvas .shield { font-size: 30px; font-weight: 700; fill: #fff; stroke: none; }
  .canvas .watermark { font-size: 64px; font-weight: 800; fill: #8fa68f; stroke: #eef5ec; stroke-width: 14; letter-spacing: -3px; }

  .zoom, .layers {
    position: absolute; left: 994px; width: 80px; background: #fff; border-radius: 9px;
    box-shadow: 0 0 7px rgba(15, 22, 33, .55); display: flex; flex-direction: column; align-items: center;
  }
  .zoom { top: 800px; height: 162px; justify-content: space-between; padding: 31px 0; box-sizing: border-box; }
  .zoom hr { width: 52px; margin: 0; border: 0; border-top: 1.5px solid #e2e4e6; }
  .zoom svg { width: 18px; height: 18px; stroke: #6d757d; stroke-width: 3.5; }
  .layers { top: 994px; height: 80px; justify-content: center; }
  .layers svg { width: 28px; height: 28px; fill: #6d757d; }
  .scale { position: absolute; left: 817px; top: 1023px; display: flex; align-items: center; gap: 13px; height: 30px; }
  .scale svg { width: 84px; height: 13px; margin-top: 0; fill: none; stroke: #111; stroke-width: 2.5; overflow: visible; }
  .scale .halo { stroke: #fff; stroke-width: 5; }
  .scale span { padding-top: 6px; text-shadow: 0 0 2px #fff, 0 0 2px #fff, 0 0 2px #fff; }
  .credit {
    position: absolute; right: 0; bottom: 0; width: 409px; height: 37px; padding-left: 30px;
    background: rgba(255, 255, 255, .8); display: flex; gap: 21px; align-items: center; color: #1b2430;
  }
  .credit span { padding-top: 6px; }

  aside { width: 540px; }
  h2 { padding: 1px 0 24px; height: 50px; }
  .card {
    height: 70px; margin-bottom: 10px; background: #fff; border-radius: 5px; color: #363636; font-weight: 800;
    display: flex; align-items: center; box-shadow: 0 10px 20px -2px rgba(10, 10, 10, .12), 0 3px 6px rgba(10, 10, 10, .16);
  }
  .card.tall { height: 100px; }
  .badge { width: 38px; height: 50px; margin: -3px 40px 0 5px; }
  .card.tall .badge { margin-top: -5px; }
  .name { flex: 1; padding-top: 5px; }
  .tall .name { flex: none; width: 384px; text-align: center; margin-right: 37px; }
  .card .chev { width: 16px; height: 12px; stroke: #4a4a4a; margin: 0 21px 0 0; }

  footer { padding-top: 113px; text-align: center; }
  footer b { font-weight: 500; color: #2f2f2f; }
  footer a { color: #485fc7; text-decoration: none; }
</style>
